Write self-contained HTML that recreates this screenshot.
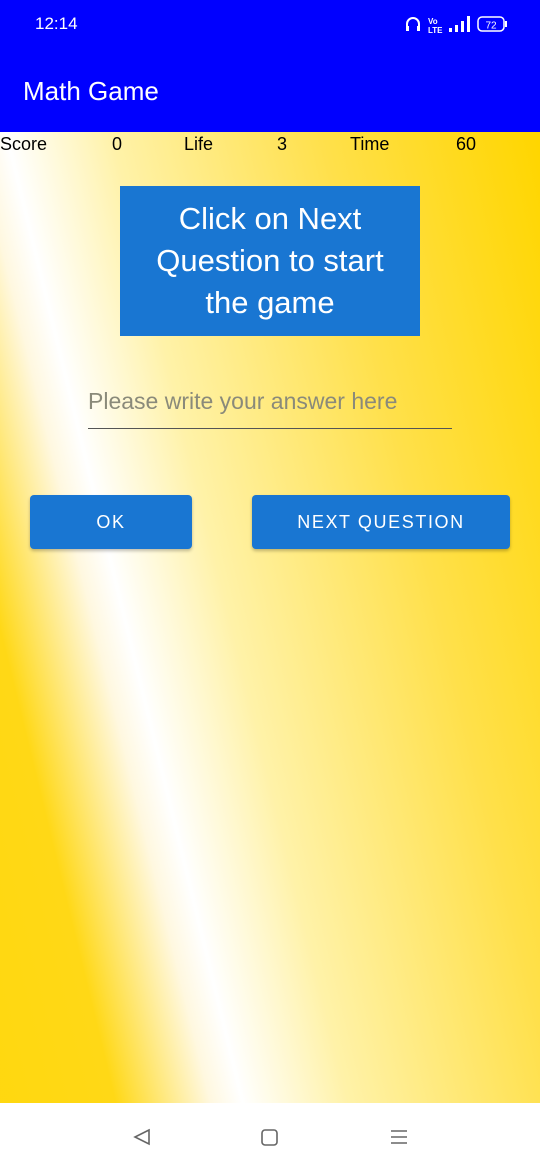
<!DOCTYPE html>
<html><head><meta charset="utf-8"><style>
*{margin:0;padding:0;box-sizing:border-box}
body{width:540px;height:1170px;overflow:hidden;position:relative;font-family:"Liberation Sans",sans-serif;background:#fff}
.status{position:absolute;top:0;left:0;width:540px;height:52px;background:#0000ff;color:#fff}
.bar{position:absolute;top:52px;left:0;width:540px;height:80px;background:#0000ff;color:#fff;font-size:26px;padding:24px 0 0 23px}
.bg{position:absolute;top:132px;left:0;width:540px;height:971px}
.nav{position:absolute;top:1103px;left:0;width:540px;height:67px;background:#fff}
.row span{position:absolute;top:134px;font-size:18px;color:#000}
.q{position:absolute;left:120px;top:186px;width:300px;height:150px;background:#1976d2;color:#fff;font-size:31px;text-align:center;line-height:42px;padding:12px 18px 0}
.inp{position:absolute;left:88px;top:388px;width:364px;height:41px;border-bottom:1.5px solid #555;color:#8a8a7a;font-size:23px}
.btn{position:absolute;top:495px;height:54px;background:#1976d2;color:#fff;border-radius:4px;font-size:18px;letter-spacing:1.6px;display:flex;align-items:center;justify-content:center;box-shadow:0 2px 3px rgba(0,0,0,.25)}
</style></head><body>
<div class="status">
<div style="position:absolute;left:35px;top:14px;font-size:17px">12:14</div>
<svg style="position:absolute;left:400px;top:12px" width="110" height="26" viewBox="0 0 110 26">
<path d="M7 16v-4a6 6 0 0 1 12 0v4" stroke="#fff" stroke-width="2" fill="none"/><rect x="6" y="14" width="3" height="5" fill="#fff"/><rect x="17" y="14" width="3" height="5" fill="#fff"/>
<text x="28" y="12" font-size="8" fill="#fff" font-weight="bold" font-family="Liberation Sans">Vo</text><text x="28" y="21" font-size="8" fill="#fff" font-weight="bold" font-family="Liberation Sans">LTE</text>
<rect x="49" y="16" width="3" height="4" fill="#fff"/><rect x="55" y="13" width="3" height="7" fill="#fff"/><rect x="61" y="9" width="3" height="11" fill="#fff"/><rect x="67" y="4" width="3" height="16" fill="#fff"/>
<rect x="78" y="5" width="26" height="14" rx="4" stroke="#fff" stroke-width="1.5" fill="none"/><rect x="105" y="9" width="2" height="6" fill="#fff"/>
<text x="91" y="16.5" font-size="10" fill="#fff" text-anchor="middle" font-family="Liberation Sans">72</text></svg>
</div>
<div class="bar">Math Game</div>
<svg class="bg" viewBox="0 132 540 971" preserveAspectRatio="none" width="540" height="971">
<defs><linearGradient id="g" gradientUnits="userSpaceOnUse" x1="-380" y1="722" x2="620" y2="478">
<stop offset="0" stop-color="#ffd600"/><stop offset=".38" stop-color="#ffd816"/><stop offset=".47" stop-color="#fff8e0"/><stop offset=".5" stop-color="#fff"/><stop offset=".6" stop-color="#fff2a8"/><stop offset=".8" stop-color="#ffe04a"/><stop offset="1" stop-color="#ffd600"/></linearGradient></defs>
<rect x="0" y="132" width="540" height="971" fill="url(#g)"/></svg>
<div class="row"><span style="left:0">Score</span><span style="left:112px">0</span><span style="left:184px">Life</span><span style="left:277px">3</span><span style="left:350px">Time</span><span style="left:456px">60</span></div>
<div class="q">Click on Next Question to start the game</div>
<div class="inp">Please write your answer here</div>
<div class="btn" style="left:30px;width:162px">OK</div>
<div class="btn" style="left:252px;width:258px">NEXT QUESTION</div>
<div class="nav">
<svg width="540" height="67"><path d="M149 27l-14 7 14 7z" stroke="#666" stroke-width="1.6" fill="none"/><rect x="262" y="27" width="15" height="15" rx="3" stroke="#666" stroke-width="1.6" fill="none"/><path d="M391 28h16M391 34h16M391 40h16" stroke="#666" stroke-width="1.6"/></svg>
</div>
</body></html>
